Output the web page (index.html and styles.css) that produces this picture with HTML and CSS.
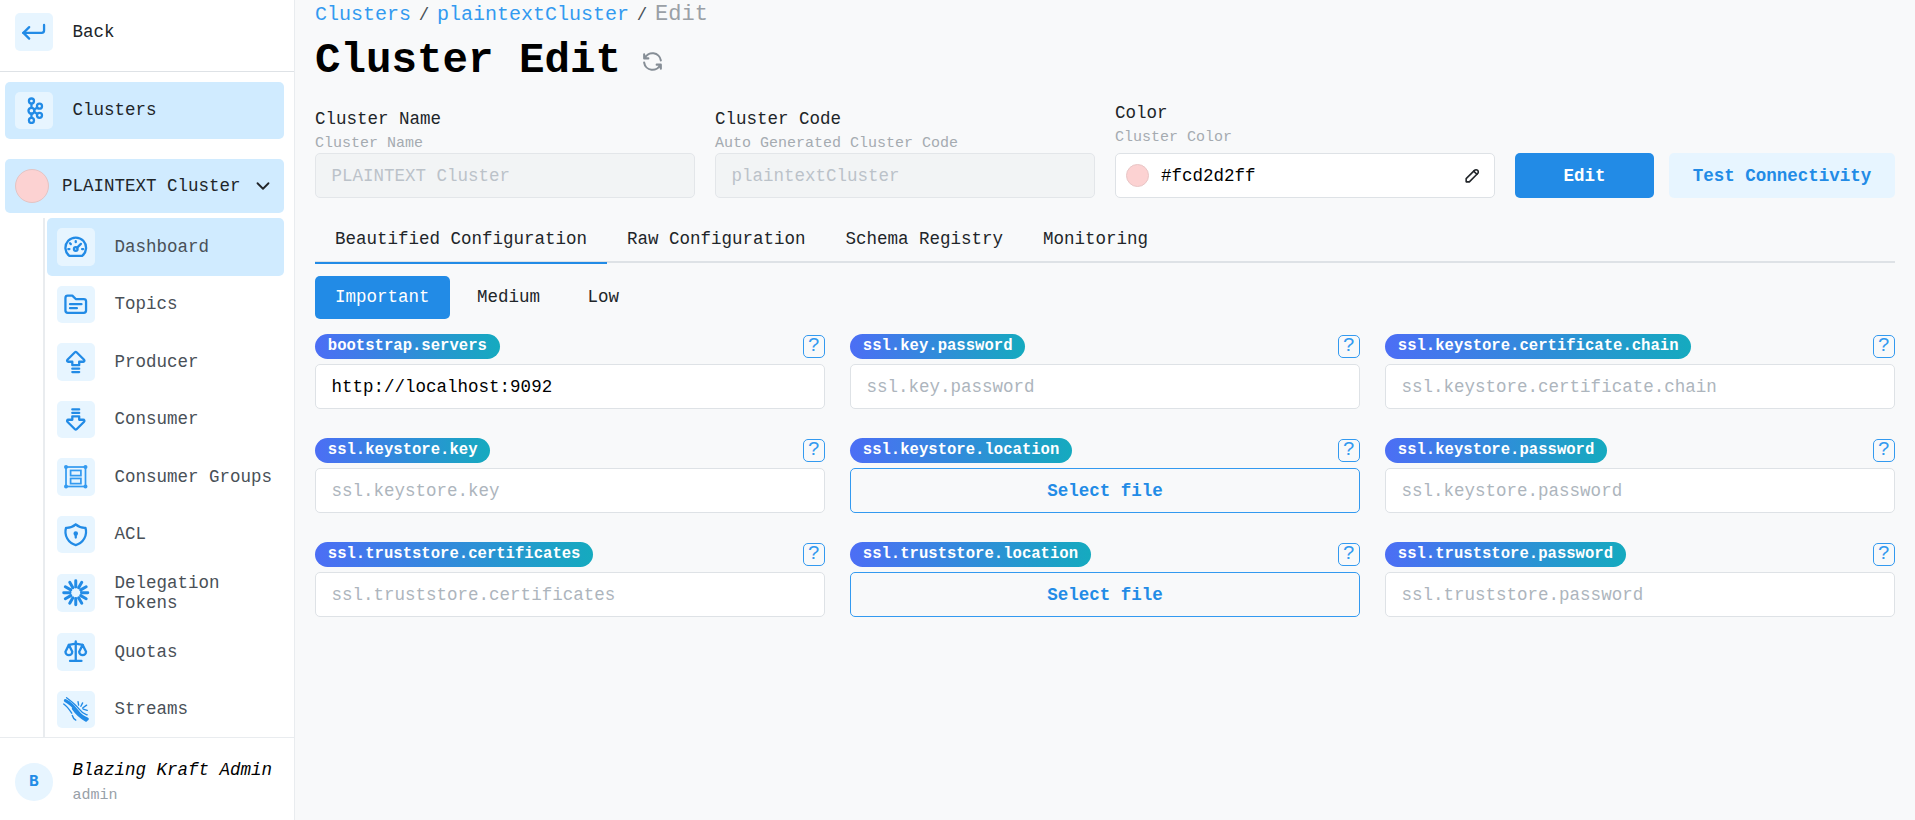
FILE: index.html
```html
<!DOCTYPE html>
<html lang="en">
<head>
<meta charset="utf-8">
<title>Cluster Edit</title>
<link rel="stylesheet" href="styles.css">
</head>
<body>
<div class="app">
  <aside class="sidebar">
    <div class="side-head">
      <a class="link">
        <span class="ico"><svg class="i" viewBox="0 0 24 24"><path d="M21 6v5a2 2 0 0 1-2 2H3"/><path d="M3 13l5-5"/><path d="M3 13l5 5"/></svg></span>
        <span class="link-text strong">Back</span>
      </a>
    </div>
    <nav class="side-nav">
      <a class="link active">
        <span class="ico"><svg class="i" viewBox="0 0 24 24"><circle cx="10" cy="3.5" r="2.2"/><circle cx="10" cy="12" r="2.6"/><circle cx="10" cy="20.5" r="2.2"/><circle cx="17" cy="8" r="2.2"/><circle cx="17" cy="16" r="2.2"/><path d="M10 5.7v3.7M10 14.6v3.7M12.4 11l2.7-1.8M12.4 13l2.7 1.8"/></svg></span>
        <span class="link-text strong">Clusters</span>
      </a>
      <a class="cluster-link">
        <span class="dot"></span>
        <span class="cluster-name">PLAINTEXT Cluster</span>
        <svg class="chev" viewBox="0 0 24 24"><path d="M6 9l6 6l6-6"/></svg>
      </a>
      <div class="sub">
        <a class="link active">
          <span class="ico"><svg class="i" viewBox="0 0 24 24"><path d="M6.4 20a9 9 0 1 1 11.2 0z"/><circle cx="12" cy="14" r="1.6"/><path d="M13.2 12.8l3.3-3.3M12 7v1M7 9l.7.7M5.5 14h1M17.5 14h1"/></svg></span>
          <span class="link-text">Dashboard</span>
        </a>
        <a class="link">
          <span class="ico"><svg class="i" viewBox="0 0 24 24"><path d="M5 4h4l3 3h7a2 2 0 0 1 2 2v8a2 2 0 0 1-2 2H5a2 2 0 0 1-2-2V6a2 2 0 0 1 2-2"/><path d="M7 11.5h10M7 15h6"/></svg></span>
          <span class="link-text">Topics</span>
        </a>
        <a class="link">
          <span class="ico"><svg class="i" viewBox="0 0 24 24"><path d="M9 12H5.414a1 1 0 0 1-.707-1.707l6.586-6.586a1 1 0 0 1 1.414 0l6.586 6.586a1 1 0 0 1-.707 1.707H15v3H9v-3z"/><path d="M9 21h6"/><path d="M9 18h6"/></svg></span>
          <span class="link-text">Producer</span>
        </a>
        <a class="link">
          <span class="ico"><svg class="i" viewBox="0 0 24 24"><path d="M15 12h3.586a1 1 0 0 1 .707 1.707l-6.586 6.586a1 1 0 0 1-1.414 0l-6.586-6.586a1 1 0 0 1 .707-1.707H9V9h6v3z"/><path d="M15 3H9"/><path d="M15 6H9"/></svg></span>
          <span class="link-text">Consumer</span>
        </a>
        <a class="link">
          <span class="ico"><svg class="i thin" viewBox="0 0 24 24"><rect x="3.5" y="3.5" width="17" height="17"/><circle cx="3.5" cy="3.5" r="1"/><circle cx="20.5" cy="3.5" r="1"/><circle cx="3.5" cy="20.5" r="1"/><circle cx="20.5" cy="20.5" r="1"/><rect x="7.5" y="6.5" width="9" height="4.5"/><rect x="7.5" y="13.5" width="9" height="4.5"/></svg></span>
          <span class="link-text">Consumer Groups</span>
        </a>
        <a class="link">
          <span class="ico"><svg class="i" viewBox="0 0 24 24"><path d="M12 3a12 12 0 0 0 8.5 3a12 12 0 0 1-8.5 15a12 12 0 0 1-8.5-15a12 12 0 0 0 8.5-3"/><circle cx="12" cy="11" r="1"/><path d="M12 12v2.5"/></svg></span>
          <span class="link-text">ACL</span>
        </a>
        <a class="link">
          <span class="ico"><svg class="i bold" viewBox="0 0 24 24"><path d="M12 1.500V7M17.250 2.900L14.500 7.670M21.100 6.750L16.330 9.500M22.500 12H17M21.100 17.250L16.330 14.500M17.250 21.100L14.500 16.330M12 22.500V17M6.750 21.100L9.500 16.330M2.900 17.250L7.670 14.500M1.500 12H7M2.900 6.750L7.670 9.500M6.750 2.900L9.500 7.670"/></svg></span>
          <span class="link-text">Delegation Tokens</span>
        </a>
        <a class="link">
          <span class="ico"><svg class="i" viewBox="0 0 24 24"><path d="M7 20h10"/><path d="M6 6l6-1l6 1"/><path d="M12 3v17"/><path d="M9 12L6 6l-3 6a3 3 0 0 0 6 0"/><path d="M21 12l-3-6l-3 6a3 3 0 0 0 6 0"/></svg></span>
          <span class="link-text">Quotas</span>
        </a>
        <a class="link">
          <span class="ico"><svg class="i" viewBox="0 0 24 24"><path class="s2" d="M3 4c4 2 7 5 10 9s6 6 9 7"/><path class="s2" d="M10 11c2 3 4 6 11 10"/><path class="s1" d="M1.500 7c3 2 5 5 7 8M4 1.500c4 3 8 6 11 10s4 4 7 5M9 17c.5 2 1.500 3 3 4M18 6l-1.500 3M21.500 8l-3.500 2.500M14 5l.5 3M22 12.500l-3.500-1"/></svg></span>
          <span class="link-text">Streams</span>
        </a>
      </div>
    </nav>
    <div class="user">
      <span class="avatar">B</span>
      <div class="user-info">
        <div class="user-name">Blazing Kraft Admin</div>
        <div class="user-role">admin</div>
      </div>
    </div>
  </aside>

  <main class="main">
    <div class="crumbs">
      <a class="crumb">Clusters</a><span class="sep">/</span><a class="crumb">plaintextCluster</a><span class="sep">/</span><span class="crumb-last">Edit</span>
    </div>
    <div class="title-row">
      <h1 class="title">Cluster Edit</h1>
      <svg class="refresh" viewBox="0 0 24 24"><path d="M20 11a8.100 8.100 0 0 0-15.500-2m-.5-4v4h4"/><path d="M4 13a8.100 8.100 0 0 0 15.500 2m.5 4v-4h-4"/></svg>
    </div>

    <div class="form-row">
      <div class="field">
        <div class="label">Cluster Name</div>
        <div class="desc">Cluster Name</div>
        <input class="input" disabled value="PLAINTEXT Cluster">
      </div>
      <div class="field">
        <div class="label">Cluster Code</div>
        <div class="desc">Auto Generated Cluster Code</div>
        <input class="input" disabled value="plaintextCluster">
      </div>
      <div class="field">
        <div class="label">Color</div>
        <div class="desc desc-color">Cluster Color</div>
        <div class="color-box">
          <span class="swatch"></span>
          <input class="input color-input" value="#fcd2d2ff">
          <svg class="pen" viewBox="0 0 24 24"><path d="M4 20h4L18.500 9.500a2.828 2.828 0 1 0-4-4L4 16v4"/><path d="M13.500 6.500l4 4"/></svg>
        </div>
      </div>
      <div class="actions">
        <button class="btn btn-fill">Edit</button>
        <button class="btn btn-light">Test Connectivity</button>
      </div>
    </div>

    <div class="tabs">
      <a class="tab tab-on">Beautified Configuration</a>
      <a class="tab">Raw Configuration</a>
      <a class="tab">Schema Registry</a>
      <a class="tab">Monitoring</a>
    </div>

    <div class="pills">
      <a class="pill pill-on">Important</a>
      <a class="pill">Medium</a>
      <a class="pill">Low</a>
    </div>

    <div class="config">
      <div class="cell">
        <div class="cell-head"><span class="badge">bootstrap.servers</span><span class="help">?</span></div>
        <input class="input" value="http://localhost:9092" placeholder="bootstrap.servers">
      </div>
      <div class="cell">
        <div class="cell-head"><span class="badge">ssl.key.password</span><span class="help">?</span></div>
        <input class="input" placeholder="ssl.key.password">
      </div>
      <div class="cell">
        <div class="cell-head"><span class="badge">ssl.keystore.certificate.chain</span><span class="help">?</span></div>
        <input class="input" placeholder="ssl.keystore.certificate.chain">
      </div>
      <div class="cell">
        <div class="cell-head"><span class="badge">ssl.keystore.key</span><span class="help">?</span></div>
        <input class="input" placeholder="ssl.keystore.key">
      </div>
      <div class="cell">
        <div class="cell-head"><span class="badge">ssl.keystore.location</span><span class="help">?</span></div>
        <button class="btn btn-outline">Select file</button>
      </div>
      <div class="cell">
        <div class="cell-head"><span class="badge">ssl.keystore.password</span><span class="help">?</span></div>
        <input class="input" placeholder="ssl.keystore.password">
      </div>
      <div class="cell">
        <div class="cell-head"><span class="badge">ssl.truststore.certificates</span><span class="help">?</span></div>
        <input class="input" placeholder="ssl.truststore.certificates">
      </div>
      <div class="cell">
        <div class="cell-head"><span class="badge">ssl.truststore.location</span><span class="help">?</span></div>
        <button class="btn btn-outline">Select file</button>
      </div>
      <div class="cell">
        <div class="cell-head"><span class="badge">ssl.truststore.password</span><span class="help">?</span></div>
        <input class="input" placeholder="ssl.truststore.password">
      </div>
    </div>
  </main>
</div>
</body>
</html>
```

FILE: styles.css
```css
* { box-sizing: border-box; }
html, body { margin: 0; height: 100%; }
body {
  font-family: "Liberation Mono", monospace;
  font-size: 17.5px;
  color: #000;
  background: #f8f9fa;
  overflow: hidden;
}
.app { display: flex; height: 820px; }

/* Sidebar */
.sidebar {
  width: 295px;
  flex: none;
  display: flex;
  flex-direction: column;
  background: #fff;
  border-right: 1.25px solid #e9ecef;
}
.side-head { border-bottom: 1.25px solid #dee2e6; padding: 3px 10px 8px 5px; height: 72px; flex: none; }
.side-nav { flex: 1; padding: 9.500px 10px 0 5px; display: flex; flex-direction: column; min-height: 0; }
.link {
  display: flex;
  flex: none;
  align-items: center;
  gap: 20px;
  padding: 10px;
  border-radius: 5px;
  line-height: 20px;
}
.link.active { background: #d0ebff; }
.link-text { color: #495057; }
.link-text.strong { color: #212529; }
.ico {
  width: 37.5px;
  height: 37.5px;
  flex: none;
  display: flex;
  align-items: center;
  justify-content: center;
  border-radius: 5px;
  background: #e7f5ff;
}
.i {
  width: 27.5px;
  height: 27.5px;
  fill: none;
  stroke: #228be6;
  stroke-width: 2;
  stroke-linecap: round;
  stroke-linejoin: round;
}
.i.thin { stroke-width: 1.5; stroke-linejoin: miter; stroke: #339af0; }
.i.bold { stroke-width: 2.600; }
.i .s1 { stroke-width: 1.200; }
.i .s2 { stroke-width: 2.800; }
.cluster-link {
  display: flex;
  flex: none;
  align-items: center;
  height: 54px;
  margin-top: 20px;
  padding: 0 10px;
  border-radius: 5px;
  background: #d0ebff;
}
.dot {
  width: 34px;
  height: 34px;
  flex: none;
  border-radius: 50%;
  background: #fcd2d2;
  border: 1.25px solid #e3c4c4;
}
.cluster-name { margin-left: 13px; flex: 1; white-space: nowrap; color: #212529; }
.chev { width: 22px; height: 22px; flex: none; fill: none; stroke: #212529; stroke-width: 2; stroke-linecap: round; stroke-linejoin: round; }
.sub { margin: 5px 0 0 38px; padding-left: 2px; border-left: 2px solid #e9ecef; flex: 1; }
.user { height: 83px; flex: none; display: flex; align-items: center; gap: 20px; padding: 6px 10px 0 15px; border-top: 1.25px solid #e9ecef; }
.avatar {
  width: 37.5px;
  height: 37.5px;
  flex: none;
  border-radius: 50%;
  background: #e7f5ff;
  color: #228be6;
  font-weight: 700;
  font-size: 16px;
  display: flex;
  align-items: center;
  justify-content: center;
}
.user-name { font-style: italic; line-height: 25px; white-space: nowrap; }
.user-role { font-size: 15px; line-height: 20px; margin-top: 3px; color: #98a0a8; }

/* Main */
.main { flex: 1; min-width: 0; padding: 1px 20px 0 20px; }
.crumbs { display: flex; align-items: center; font-size: 20px; line-height: 28px; height: 28px; }
.crumb { color: #339af0; }
.sep { font-size: 17.500px; color: #495057; width: 26px; text-align: center; }
.crumb-last { color: #9aa0a6; font-size: 22px; }
.title-row { display: flex; align-items: center; gap: 19px; margin-top: 5px; height: 54px; }
.title { margin: 0; font-size: 42.500px; line-height: 54px; font-weight: 700; }
.refresh { width: 25px; height: 25px; fill: none; stroke: #868e96; stroke-width: 2; stroke-linecap: round; stroke-linejoin: round; }

.form-row { display: grid; grid-template-columns: repeat(4, 1fr); gap: 20px; align-items: end; margin-top: 12.500px; }
.label { font-size: 17.500px; line-height: 25px; color: #212529; }
.desc { font-size: 15px; line-height: 20px; margin: 2.500px 0 -1px; color: #a5abb1; white-space: nowrap; }
.desc-color { margin-bottom: 5px; }
.input {
  display: block;
  width: 100%;
  height: 45px;
  padding: 0 15.600px;
  border: 1.250px solid #dee2e6;
  border-radius: 5px;
  background: #fff;
  color: #000;
  font-family: inherit;
  font-size: 17.500px;
  outline: none;
}
.input::placeholder { color: #adb5bd; opacity: 1; }
.input:disabled { background: #f1f3f5; color: #adb5bd; opacity: .8; }
.color-box { position: relative; }
.color-input { padding-left: 45px; }
.swatch {
  position: absolute;
  left: 11px;
  top: 11px;
  width: 23px;
  height: 23px;
  border-radius: 50%;
  background: #fcd2d2;
  border: 1px solid #e8c6c6;
}
.pen {
  position: absolute;
  right: 13px;
  top: 13px;
  width: 19px;
  height: 19px;
  fill: none;
  stroke: #212529;
  stroke-width: 2;
  stroke-linecap: round;
  stroke-linejoin: round;
}
.actions { display: flex; gap: 15px; }
.btn {
  height: 45px;
  border-radius: 5px;
  font-family: inherit;
  font-size: 17.500px;
  font-weight: 700;
  cursor: pointer;
  border: 0;
  padding: 0;
}
.btn-fill { flex: 1; background: #228be6; color: #fff; }
.btn-light { width: 226px; flex: none; background: #e7f5ff; color: #228be6; }
.btn-outline { display: block; width: 100%; background: transparent; color: #228be6; border: 1.250px solid #339af0; }

.tabs { display: flex; margin-top: 16.500px; border-bottom: 2.500px solid #dee2e6; }
.tab { padding: 12px 20px 10px; line-height: 25px; color: #212529; margin-bottom: -2.500px; border-bottom: 2.500px solid transparent; }
.tab-on { border-bottom-color: #228be6; }

.pills { display: flex; gap: 7.500px; margin-top: 13px; }
.pill { height: 43px; padding: 0 20px; border-radius: 5px; line-height: 43px; color: #212529; }
.pill-on { background: #228be6; color: #fff; }

.config { display: grid; grid-template-columns: repeat(3, 1fr); gap: 29px 25px; margin-top: 15px; }
.cell-head { display: flex; align-items: center; justify-content: space-between; height: 25px; margin-bottom: 5px; }
.badge {
  height: 25px;
  padding: 0 12.800px;
  border-radius: 12.500px;
  background: linear-gradient(90deg, #4c6ef5, #15aabf);
  color: #fff;
  font-size: 15.600px;
  font-weight: 700;
  line-height: 25px;
  white-space: nowrap;
}
.help {
  width: 22px;
  height: 23px;
  border: 1.500px solid #339af0;
  border-radius: 5px;
  color: #339af0;
  font-size: 20px;
  line-height: 20px;
  text-align: center;
  font-weight: 400;
}
```
